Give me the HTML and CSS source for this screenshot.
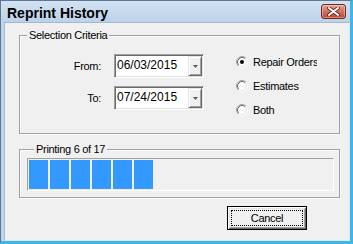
FILE: index.html
```html
<!DOCTYPE html>
<html lang="en">
<head>
    <meta charset="UTF-8">
    <meta name="viewport" content="width=device-width, initial-scale=1.0">
    <title>Reprint History</title>
    <link rel="stylesheet" href="styles.css">
</head>
<body>
    <div class="window">
        <div class="titlebar">
            <span class="title">Reprint History</span>
            <button class="close-btn" aria-label="Close">
                <svg width="13" height="9" viewBox="0 0 13 9">
                    <path d="M2 1 L11 8 M11 1 L2 8" stroke="#5e2218" stroke-width="3.6" stroke-linecap="round"/>
                    <path d="M2 1 L11 8 M11 1 L2 8" stroke="#fff" stroke-width="2" stroke-linecap="round"/>
                </svg>
            </button>
        </div>

        <div class="client">
            <fieldset class="group criteria">
                <legend>Selection Criteria</legend>
                <div class="dates">
                    <label class="date-label">From:</label>
                    <div class="combo">
                        <span class="combo-text">06/03/2015</span>
                        <span class="combo-btn"><svg width="5" height="3" viewBox="0 0 5 3"><path d="M0 0 H5 L2.5 3 Z" fill="#5a5a5a"/></svg></span>
                    </div>
                    <label class="date-label">To:</label>
                    <div class="combo">
                        <span class="combo-text">07/24/2015</span>
                        <span class="combo-btn"><svg width="5" height="3" viewBox="0 0 5 3"><path d="M0 0 H5 L2.5 3 Z" fill="#5a5a5a"/></svg></span>
                    </div>
                </div>

                <div class="radios">
                    <div class="radio">
                        <svg class="radio-mark" width="12" height="12" viewBox="0 0 12 12">
                            <circle cx="6" cy="6" r="5" fill="#fff"/>
                            <path d="M2.11 9.89 A5.5 5.5 0 0 1 9.89 2.11" stroke="#a0a0a0" fill="none"/>
                            <path d="M9.89 2.11 A5.5 5.5 0 0 1 2.11 9.89" stroke="#fff" fill="none"/>
                            <path d="M2.82 9.18 A4.5 4.5 0 0 1 9.18 2.82" stroke="#696969" fill="none"/>
                            <path d="M9.18 2.82 A4.5 4.5 0 0 1 2.82 9.18" stroke="#e3e3e3" fill="none"/>
                            <circle cx="6" cy="6" r="2" fill="#000"/>
                        </svg>
                        <span>Repair Orders</span>
                    </div>
                    <div class="radio">
                        <svg class="radio-mark" width="12" height="12" viewBox="0 0 12 12">
                            <circle cx="6" cy="6" r="5" fill="#fff"/>
                            <path d="M2.11 9.89 A5.5 5.5 0 0 1 9.89 2.11" stroke="#a0a0a0" fill="none"/>
                            <path d="M9.89 2.11 A5.5 5.5 0 0 1 2.11 9.89" stroke="#fff" fill="none"/>
                            <path d="M2.82 9.18 A4.5 4.5 0 0 1 9.18 2.82" stroke="#696969" fill="none"/>
                            <path d="M9.18 2.82 A4.5 4.5 0 0 1 2.82 9.18" stroke="#e3e3e3" fill="none"/>
                        </svg>
                        <span>Estimates</span>
                    </div>
                    <div class="radio">
                        <svg class="radio-mark" width="12" height="12" viewBox="0 0 12 12">
                            <circle cx="6" cy="6" r="5" fill="#fff"/>
                            <path d="M2.11 9.89 A5.5 5.5 0 0 1 9.89 2.11" stroke="#a0a0a0" fill="none"/>
                            <path d="M9.89 2.11 A5.5 5.5 0 0 1 2.11 9.89" stroke="#fff" fill="none"/>
                            <path d="M2.82 9.18 A4.5 4.5 0 0 1 9.18 2.82" stroke="#696969" fill="none"/>
                            <path d="M9.18 2.82 A4.5 4.5 0 0 1 2.82 9.18" stroke="#e3e3e3" fill="none"/>
                        </svg>
                        <span>Both</span>
                    </div>
                </div>
            </fieldset>

            <fieldset class="group printing">
                <legend>Printing 6 of 17</legend>
                <div class="progress">
                    <span class="block"></span>
                    <span class="block"></span>
                    <span class="block"></span>
                    <span class="block"></span>
                    <span class="block"></span>
                    <span class="block"></span>
                </div>
            </fieldset>

            <div class="actions">
                <button class="btn default"><span class="btn-focus">Cancel</span></button>
            </div>
        </div>
    </div>
</body>
</html>
```

FILE: styles.css
```css
body {
    font-family: "Liberation Sans", Arial, sans-serif;
    font-size: 11px;
    letter-spacing: -0.3px;
    color: #000;
    margin: 0;
    padding: 0;
}
.window {
    width: 353px;
    height: 244px;
    box-sizing: border-box;
    display: flex;
    flex-direction: column;
    border-left: 1px solid #5d7894;
    border-top: 1px solid #5d7894;
    border-right: 3px solid #3db6ec;
    border-bottom: 3px solid #3db6ec;
    background: #c0d5eb;
}
.titlebar {
    height: 21px;
    display: flex;
    align-items: center;
    justify-content: space-between;
    padding: 0 4px 0 6px;
    background: linear-gradient(#d3e2f2, #bcd2ea);
}
.title {
    font-size: 14px;
    font-weight: bold;
    letter-spacing: 0;
    padding-top: 2px;
}
.close-btn {
    width: 25px;
    height: 15px;
    padding: 0;
    display: flex;
    align-items: center;
    justify-content: center;
    border: 1px solid #6b2a20;
    border-radius: 3px;
    background: linear-gradient(#e4a694, #d07260 50%, #bf4631);
    box-shadow: inset 0 0 0 1px rgba(255, 255, 255, 0.35);
}
.client {
    flex: 1;
    margin-left: 3px;
    background: #f0f0f0;
    border: 1px solid;
    border-color: #a6b9cc #dfe8f1 #dfe8f1 #a6b9cc;
}
.group {
    margin: 0 9px 0 14px;
    min-width: 0;
    border: 1px solid #a0a0a0;
    box-shadow: inset 1px 1px 0 #fff, 1px 1px 0 #fff;
}
.group legend {
    margin-left: 7px;
    padding: 0 2px;
    line-height: 13px;
    background: #f0f0f0;
}
.criteria {
    margin-top: 6px;
    padding: 8px 0 11px 0;
    display: flex;
}
.dates {
    margin-top: 4px;
    display: grid;
    grid-template-columns: 81px 90px;
    grid-template-rows: 24px 24px;
    column-gap: 13px;
    row-gap: 8px;
    align-items: center;
}
.date-label {
    justify-self: end;
}
.combo {
    height: 24px;
    box-sizing: border-box;
    display: flex;
    padding: 1px;
    background: #fff;
    border: 1px solid;
    border-color: #a0a0a0 #fff #fff #a0a0a0;
    box-shadow: inset 1px 1px 0 #696969, inset -1px -1px 0 #e3e3e3;
}
.combo-text {
    flex: 1;
    font-size: 12px;
    letter-spacing: 0;
    padding: 0 0 2px 1px;
    display: flex;
    align-items: center;
}
.combo-btn {
    width: 14px;
    box-sizing: border-box;
    display: flex;
    align-items: center;
    justify-content: center;
    background: #f0f0f0;
    border: 1px solid;
    border-color: #e3e3e3 #696969 #696969 #e3e3e3;
    box-shadow: inset 1px 1px 0 #fff, inset -1px -1px 0 #a0a0a0;
}
.radios {
    margin-left: 32px;
    display: flex;
    flex-direction: column;
}
.radio {
    width: 81px;
    height: 24px;
    display: flex;
    align-items: center;
    gap: 5px;
    overflow: hidden;
    white-space: nowrap;
}
.radio-mark {
    flex: none;
}
.printing {
    margin-top: 9px;
    padding: 2px 5px 6px 7px;
}
.progress {
    height: 33px;
    box-sizing: border-box;
    display: flex;
    gap: 2px;
    padding: 1px;
    border: 1px solid;
    border-color: #a0a0a0 #fff #fff #a0a0a0;
}
.block {
    width: 19px;
    background: #3399ff;
}
.actions {
    margin-top: 8px;
    display: flex;
    justify-content: flex-end;
    padding-right: 42px;
}
.btn {
    width: 80px;
    height: 24px;
    display: flex;
    padding: 3px;
    font-family: inherit;
    font-size: 11px;
    letter-spacing: -0.3px;
    color: #000;
    background: #f0f0f0;
    border: 1px solid #000;
    box-shadow: inset 1px 1px 0 #fff, inset -1px -1px 0 #696969, inset 2px 2px 0 #e3e3e3, inset -2px -2px 0 #a0a0a0;
}
.btn-focus {
    flex: 1;
    display: flex;
    align-items: center;
    justify-content: center;
    border: 1px dotted #000;
}
```
